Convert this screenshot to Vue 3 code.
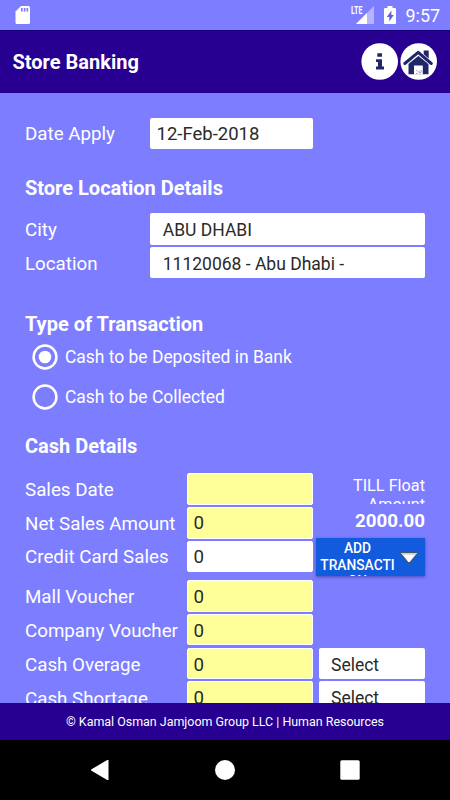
<script setup>
import { ref } from 'vue'

const transaction = ref('deposit')
const options = [
  { id: 'deposit', label: 'Cash to be Deposited in Bank' },
  { id: 'collect', label: 'Cash to be Collected' },
]
const salesRows = [
  { label: 'Sales Date', value: '', tone: 'yellow' },
  { label: 'Net Sales Amount', value: '0', tone: 'yellow' },
  { label: 'Credit Card Sales', value: '0', tone: 'white' },
]
const voucherRows = [
  { label: 'Mall Voucher', value: '0' },
  { label: 'Company Voucher', value: '0' },
  { label: 'Cash Overage', value: '0', select: true },
  { label: 'Cash Shortage', value: '0', select: true },
]
</script>

<template>
  <div class="screen">
    <div class="status">
      <svg class="sd" viewBox="0 0 16 20" width="16" height="20">
        <path fill="#fff" d="M6 1h7.500q1.500 0 1.500 1.500v15q0 1.500-1.500 1.500h-11.500q-1.500 0-1.500-1.500v-11z" />
        <path fill="#7d7dff" d="M6 3h1.700v3.600H6zM8.800 3h1.700v3.600H8.800zM11.500 3h1.700v3.600h-1.700z" />
      </svg>
      <div class="status-right">
        <span class="lte">LTE</span>
        <svg class="signal" viewBox="0 0 18 18" width="18" height="18">
          <path fill="#b5b5ff" d="M18 0v18H0z" />
          <path fill="#7d7dff" d="M0 0h8v9H0z" />
          <path fill="#fff" d="M11 7v11H0z" />
        </svg>
        <svg class="battery" viewBox="0 0 12 18" width="12" height="18">
          <path fill="#fff" d="M3.500 0h5v2H11q1 0 1 1v14q0 1-1 1H1q-1 0-1-1V3q0-1 1-1h2.500z" />
          <path fill="#6262cf" d="M7.500 4.500L2.800 11h2.500v4.500L9.800 9H7.300z" />
        </svg>
        <span class="clock">9:57</span>
      </div>
    </div>

    <header class="header">
      <h1>Store Banking</h1>
      <div class="actions">
        <button aria-label="Information">
          <svg viewBox="0 0 37 37" width="37" height="37">
            <circle cx="18.700" cy="18.500" r="18.300" fill="#fff" />
            <path fill="#1f2768" d="M16.300 10.300h4.700v3.400h-4.700zM15 16.200h6v7.300h2v2.900h-8v-2.900h2v-4.400h-2z" />
          </svg>
        </button>
        <button aria-label="Home">
          <svg viewBox="0 0 37 37" width="37" height="37">
            <circle cx="18.700" cy="18.500" r="18.300" fill="#fff" />
            <path fill="#1f2768" d="M23.700 7.500h5v11l-5-4.500z" />
            <path fill="#1f2768" d="M8.500 20l10-8.500L28.500 20v11.200h-20z" />
            <path fill="none" stroke="#fff" stroke-width="4.600" d="M4 21.500L18.500 10 32.500 21.500" />
            <path fill="none" stroke="#1f2768" stroke-width="3" stroke-linecap="round" stroke-linejoin="round" d="M4.800 20.500L18.200 9.300 31.300 20.500" />
            <path fill="#fff" d="M14 22.500h8.800v9H14z" />
            <path fill="none" stroke="#8d91b3" stroke-width=".8" d="M16 27l1.500 1.500m0 2H16m3-3v2.500h1.500m0-3l1 1-1 2" />
          </svg>
        </button>
      </div>
    </header>

    <main class="content">
      <div class="row date-row">
        <label>Date Apply</label>
        <div class="field date">12-Feb-2018</div>
      </div>

      <h2 class="store-title">Store Location Details</h2>
      <div class="rows">
        <div class="row"><label>City</label><div class="field picker">ABU DHABI</div></div>
        <div class="row"><label>Location</label><div class="field picker">11120068 - Abu Dhabi -</div></div>
      </div>

      <h2 class="type-title">Type of Transaction</h2>
      <div class="radios">
        <div v-for="o in options" :key="o.id" class="radio" @click="transaction = o.id">
          <svg viewBox="0 0 26 26" width="26" height="26">
            <circle cx="13" cy="13" r="11.400" fill="none" stroke="#fff" stroke-width="2.500" />
            <circle v-if="transaction === o.id" cx="13" cy="13" r="6.300" fill="#fff" />
          </svg>
          <span class="radio-label">{{ o.label }}</span>
        </div>
      </div>

      <h2 class="cash-title">Cash Details</h2>
      <div class="sales">
        <div class="rows cash">
          <div v-for="r in salesRows" :key="r.label" class="row">
            <label>{{ r.label }}</label>
            <div class="field amount" :class="r.tone">{{ r.value }}</div>
          </div>
        </div>
        <div class="till">
          <div class="till-label">TILL Float<br />Amount</div>
          <div class="till-value">2000.00</div>
          <button class="add">
            <span class="add-text">ADD<br />TRANSACTI<br />ON</span>
            <svg viewBox="0 0 20 14" width="20" height="14">
              <path fill="#45587c" d="M1 1h18q.5.500 0 1L11.200 12.500H8.800L1 2q-.5-.5 0-1z" />
              <path fill="#fff" d="M2 2h16L10.700 11h-1.400z" />
              <path fill="#cfcfcf" d="M2 2h16l-1.500 1.800h-13z" />
            </svg>
          </button>
        </div>
      </div>
      <div class="rows cash vouchers">
        <div v-for="r in voucherRows" :key="r.label" class="row">
          <label>{{ r.label }}</label>
          <div class="field amount yellow">{{ r.value }}</div>
          <div v-if="r.select" class="field select">Select</div>
        </div>
      </div>
    </main>

    <footer class="footer">© Kamal Osman Jamjoom Group LLC | Human Resources</footer>
    <nav class="nav">
      <svg viewBox="0 0 20 22" width="20" height="22"><path fill="#fff" d="M18.500 1v20q-1 .2-1.700-.3L1.500 11.800q-1-.8 0-1.600L16.800 1.300q.7-.5 1.700-.3z" /></svg>
      <svg viewBox="0 0 20 20" width="20" height="20"><circle cx="10" cy="10" r="10" fill="#fff" /></svg>
      <svg viewBox="0 0 20 20" width="20" height="20"><rect x=".3" y=".3" width="19.400" height="19.400" rx="1.500" fill="#fff" /></svg>
    </nav>
  </div>
</template>

<style>
body { margin: 0; }
</style>

<style scoped>
.screen {
  width: 450px;
  height: 800px;
  display: flex;
  flex-direction: column;
  overflow: hidden;
  background: #7d7dff;
  color: #fff;
  font-family: Roboto, sans-serif;
}
.screen * { box-sizing: border-box; }
svg { display: block; flex: none; }
button { border: 0; padding: 0; background: none; color: inherit; font-family: inherit; }
h1, h2 { margin: 0; font-weight: 700; white-space: nowrap; }
.status {
  height: 30px;
  flex: none;
  display: flex;
  justify-content: space-between;
  padding: 5px 10px 0 15px;
}
.status-right { display: flex; align-items: flex-start; }
.lte {
  position: relative;
  z-index: 1;
  width: 13px;
  margin-top: 1px;
  font-size: 10.500px;
  line-height: 10px;
  font-weight: 700;
  transform: scaleX(.68);
  transform-origin: left;
}
.signal { margin: 1px 10.500px 0 -8px; }
.battery { margin: 1px 9.500px 0 0; }
.clock { font-size: 17.900px; line-height: 22px; font-weight: 400; }
.header {
  height: 62.500px;
  flex: none;
  display: flex;
  align-items: center;
  justify-content: space-between;
  padding: 0 13px 0 12.500px;
  background: #270091;
  border-top: 1px solid #190078;
}
h1 { font-size: 20px; }
.actions { display: flex; gap: 2px; }
.content {
  height: 610px;
  flex: none;
  overflow: hidden;
  padding: 25px 25px 0;
  font-size: 18.750px;
}
h2 { font-size: 20px; line-height: 30px; }
.row { display: flex; height: 31.500px; align-items: center; }
.rows { display: flex; flex-direction: column; gap: 2.250px; }
label { width: 125px; flex: none; line-height: 31px; padding-top: 3px; white-space: nowrap; }
.cash label { width: 162px; padding-top: 2.500px; }
.cash.vouchers label { padding-top: 4px; }
.field {
  height: 31.500px;
  line-height: 34px;
  border-radius: 2px;
  background: #fff;
  color: #2a2a2a;
  white-space: nowrap;
}
.date { width: 163px; padding-left: 6.500px; font-size: 18.500px; line-height: 33px; }
.date-row label { padding-top: 2px; }
.picker { width: 275px; padding-left: 12.750px; font-size: 17.500px; }
.amount { width: 125.500px; padding-left: 5.500px; border: 1px solid #fff; line-height: 31.500px; }
.vouchers .amount { line-height: 33px; }
.yellow { background: #ffff99; }
.select { width: 106.500px; margin-left: 6px; padding-left: 12.500px; font-size: 17.500px; line-height: 34.500px; }
.store-title { margin: 24px 0 10px; }
.type-title { margin-top: 31px; }
.radios { margin-top: -2px; }
.radio { height: 40px; display: flex; align-items: center; padding-left: 7px; }
.radio-label { margin-left: 7px; font-size: 17.450px; }
.cash-title { margin: 13.500px 0 12.500px; }
.sales { display: flex; height: 99px; }
.till { width: 112.500px; display: flex; flex-direction: column; align-items: flex-end; }
.till-label { height: 31px; flex: none; padding-top: 2.500px; overflow: hidden; text-align: right; font-size: 16.250px; line-height: 19px; }
.till-value { height: 34px; flex: none; line-height: 34.500px; font-size: 18.750px; font-weight: 700; }
.add {
  width: 109px;
  height: 37.500px;
  flex: none;
  display: flex;
  align-items: flex-start;
  overflow: hidden;
  background: #115bdc;
  box-shadow: 0 1px 3px #26268f99;
  padding: 2px 6px 0 4px;
}
.add-text { width: 76px; margin: 0 3.500px 0 -.5px; font-size: 13.800px; line-height: 16.400px; font-weight: 500; text-align: center; }
.add svg { margin-top: 10.500px; }
.vouchers { margin-top: 7.900px; }
.footer {
  height: 37.500px;
  flex: none;
  background: #270091;
  text-align: center;
  font-size: 12.450px;
  line-height: 38px;
  white-space: nowrap;
}
.nav {
  height: 60px;
  flex: none;
  background: #000;
  display: flex;
  align-items: center;
  justify-content: space-between;
  padding: 0 90px;
}
</style>
